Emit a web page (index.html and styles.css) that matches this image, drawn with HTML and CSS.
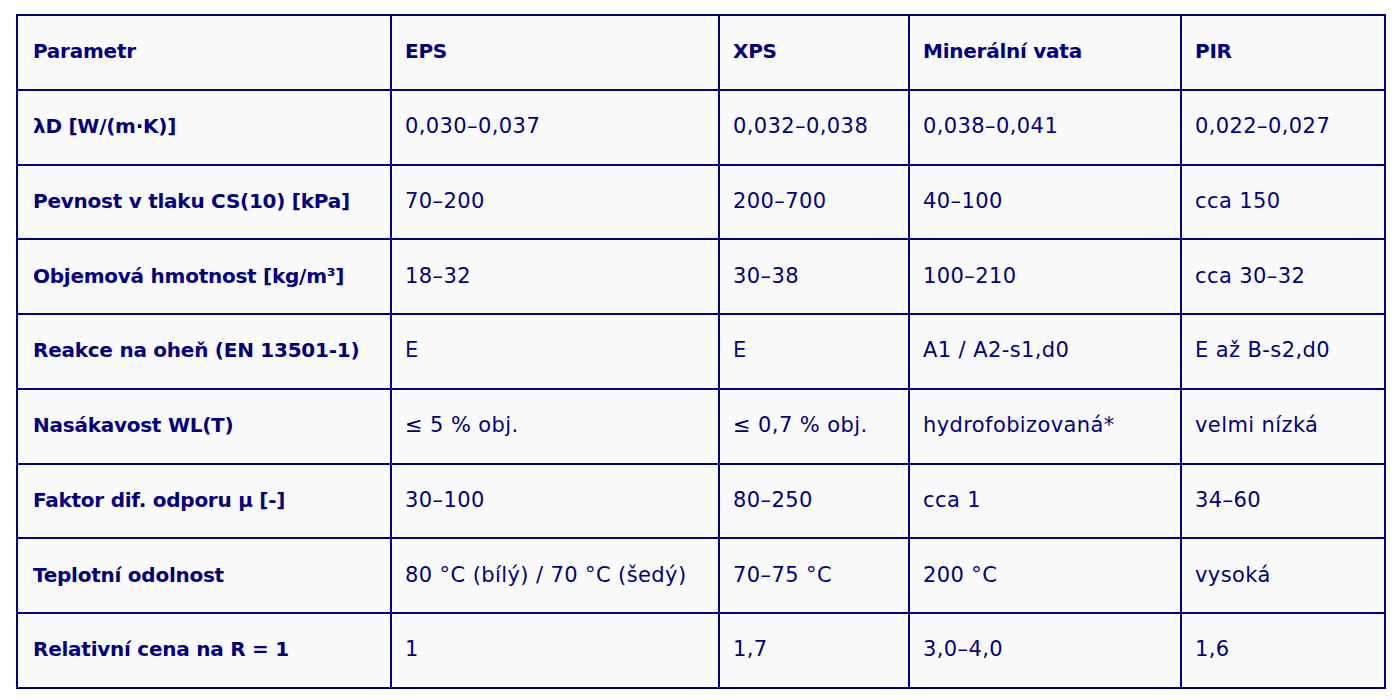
FILE: index.html
```html
<!DOCTYPE html>
<html lang="cs">
<head>
<meta charset="utf-8">
<title>Porovnání tepelných izolací</title>
<link rel="stylesheet" href="styles.css">
</head>
<body>
<table class="compare">
  <colgroup>
    <col class="c1"><col class="c2"><col class="c3"><col class="c4"><col class="c5">
  </colgroup>
  <thead>
    <tr><th>Parametr</th><th>EPS</th><th>XPS</th><th>Minerální vata</th><th>PIR</th></tr>
  </thead>
  <tbody>
    <tr><th>λD [W/(m·K)]</th><td>0,030–0,037</td><td>0,032–0,038</td><td>0,038–0,041</td><td>0,022–0,027</td></tr>
    <tr><th>Pevnost v tlaku CS(10) [kPa]</th><td>70–200</td><td>200–700</td><td>40–100</td><td>cca 150</td></tr>
    <tr><th>Objemová hmotnost [kg/m³]</th><td>18–32</td><td>30–38</td><td>100–210</td><td>cca 30–32</td></tr>
    <tr><th>Reakce na oheň (EN 13501-1)</th><td>E</td><td>E</td><td>A1 / A2-s1,d0</td><td>E až B-s2,d0</td></tr>
    <tr><th>Nasákavost WL(T)</th><td>≤ 5 % obj.</td><td>≤ 0,7 % obj.</td><td>hydrofobizovaná*</td><td>velmi nízká</td></tr>
    <tr><th>Faktor dif. odporu μ [-]</th><td>30–100</td><td>80–250</td><td>cca 1</td><td>34–60</td></tr>
    <tr><th>Teplotní odolnost</th><td>80 °C (bílý) / 70 °C (šedý)</td><td>70–75 °C</td><td>200 °C</td><td>vysoká</td></tr>
    <tr><th>Relativní cena na R = 1</th><td>1</td><td>1,7</td><td>3,0–4,0</td><td>1,6</td></tr>
  </tbody>
</table>
</body>
</html>
```
FILE: styles.css
```css
html, body {
  margin: 0;
  background: #ffffff;
}
body {
  padding: 14px 0 0 16px;
  font-family: "DejaVu Sans", "Liberation Sans", sans-serif;
  color: #000080;
}
.compare {
  border-collapse: separate;
  border-spacing: 0;
  table-layout: fixed;
  width: 1370px;
  border-top: 2px solid #000080;
  border-left: 2px solid #000080;
  background: #fafafa;
}
.c1 { width: 374px; }
.c2 { width: 328px; }
.c3 { width: 190px; }
.c4 { width: 272px; }
.c5 { width: 204px; }
.compare th,
.compare td {
  box-sizing: border-box;
  height: 74.75px;
  padding: 0 8px 2px 13px;
  border-right: 2px solid #000080;
  border-bottom: 2px solid #000080;
  text-align: left;
  vertical-align: middle;
  line-height: 26px;
  white-space: nowrap;
}
.compare th {
  font-weight: bold;
  font-size: 20px;
  letter-spacing: -0.25px;
}
.compare td {
  font-weight: normal;
  font-size: 21px;
  letter-spacing: 0.4px;
}
.compare tbody th,
.compare thead th:first-child {
  padding-left: 15px;
}
```
